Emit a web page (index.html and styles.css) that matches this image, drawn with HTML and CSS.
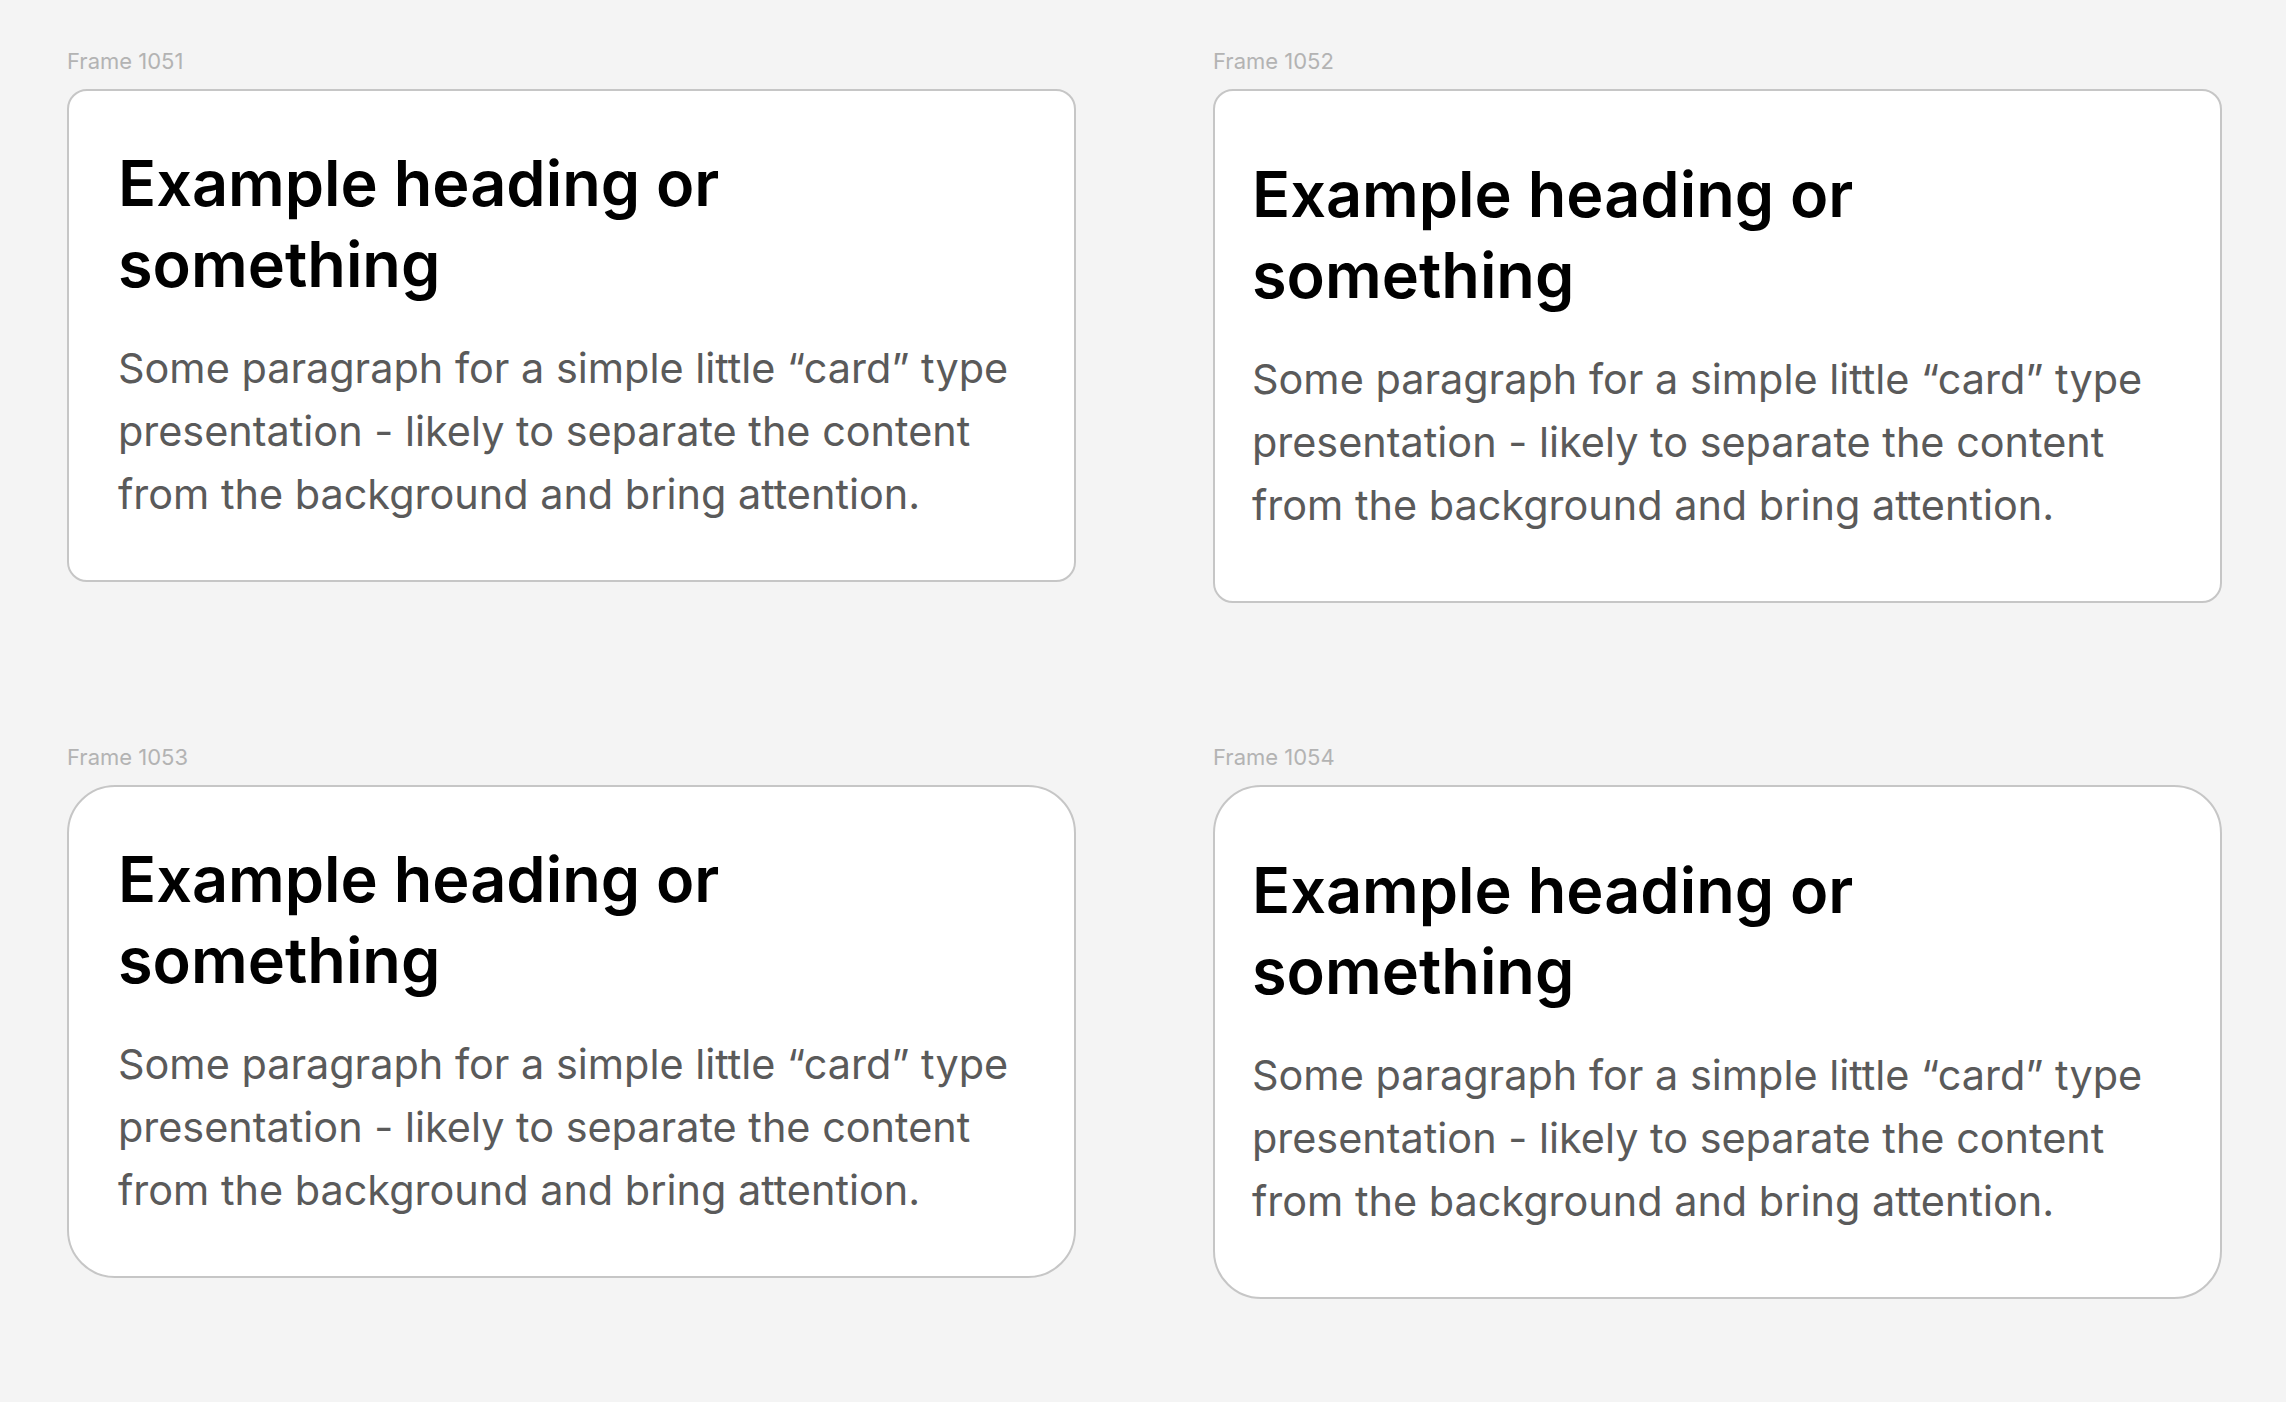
FILE: index.html
```html
<!DOCTYPE html>
<html>
	<head>
		<meta charset="utf-8" />
		<title>Cards</title>
		<link rel="stylesheet" href="styles.css">
	</head>
	<body>
		<!--四个示例卡片-->
		<div class="board">
			<div class="frame">
				<div class="frame-name">Frame 1051</div>
				<div class="card">
					<h2>Example heading or<br>something</h2>
					<p>Some paragraph for a simple little “card” type<br>presentation - likely to separate the content<br>from the background and bring attention.</p>
				</div>
			</div>
			<div class="frame">
				<div class="frame-name">Frame 1052</div>
				<div class="card card-roomy">
					<h2>Example heading or<br>something</h2>
					<p>Some paragraph for a simple little “card” type<br>presentation - likely to separate the content<br>from the background and bring attention.</p>
				</div>
			</div>
			<div class="frame">
				<div class="frame-name">Frame 1053</div>
				<div class="card card-round">
					<h2>Example heading or<br>something</h2>
					<p>Some paragraph for a simple little “card” type<br>presentation - likely to separate the content<br>from the background and bring attention.</p>
				</div>
			</div>
			<div class="frame">
				<div class="frame-name">Frame 1054</div>
				<div class="card card-roomy card-round">
					<h2>Example heading or<br>something</h2>
					<p>Some paragraph for a simple little “card” type<br>presentation - likely to separate the content<br>from the background and bring attention.</p>
				</div>
			</div>
		</div>
	</body>
</html>
```

FILE: styles.css
```css
*{
	margin: 0;
	padding: 0;
	box-sizing: border-box;
}
body{
	background-color: #f4f4f4;
	font-family: Inter, "Noto Sans", sans-serif;
	padding: 50px 0 0 67px;
}
.board{
	display: grid;
	grid-template-columns: 1009px 1009px;
	column-gap: 137px;
	row-gap: 143px;
	align-items: start;
}
.frame-name{
	font-size: 22px;
	line-height: 22px;
	color: #b3b3b3;
	margin-bottom: 17px;
}
.card{
	background-color: #fff;
	border: 2px solid #c6c6c6;
	border-radius: 20px;
	padding: 52px 49px 54px;
}
/*第二种:上下更宽,左右更窄*/
.card-roomy{
	padding: 63px 37px 64px;
}
.card-round{
	border-radius: 48px;
}
.card h2{
	font-size: 63px;
	line-height: 81px;
	font-weight: 600;
	color: #000;
}
.card p{
	margin-top: 32px;
	font-size: 41.4px;
	line-height: 63px;
	color: #5a5a5a;
}
```
